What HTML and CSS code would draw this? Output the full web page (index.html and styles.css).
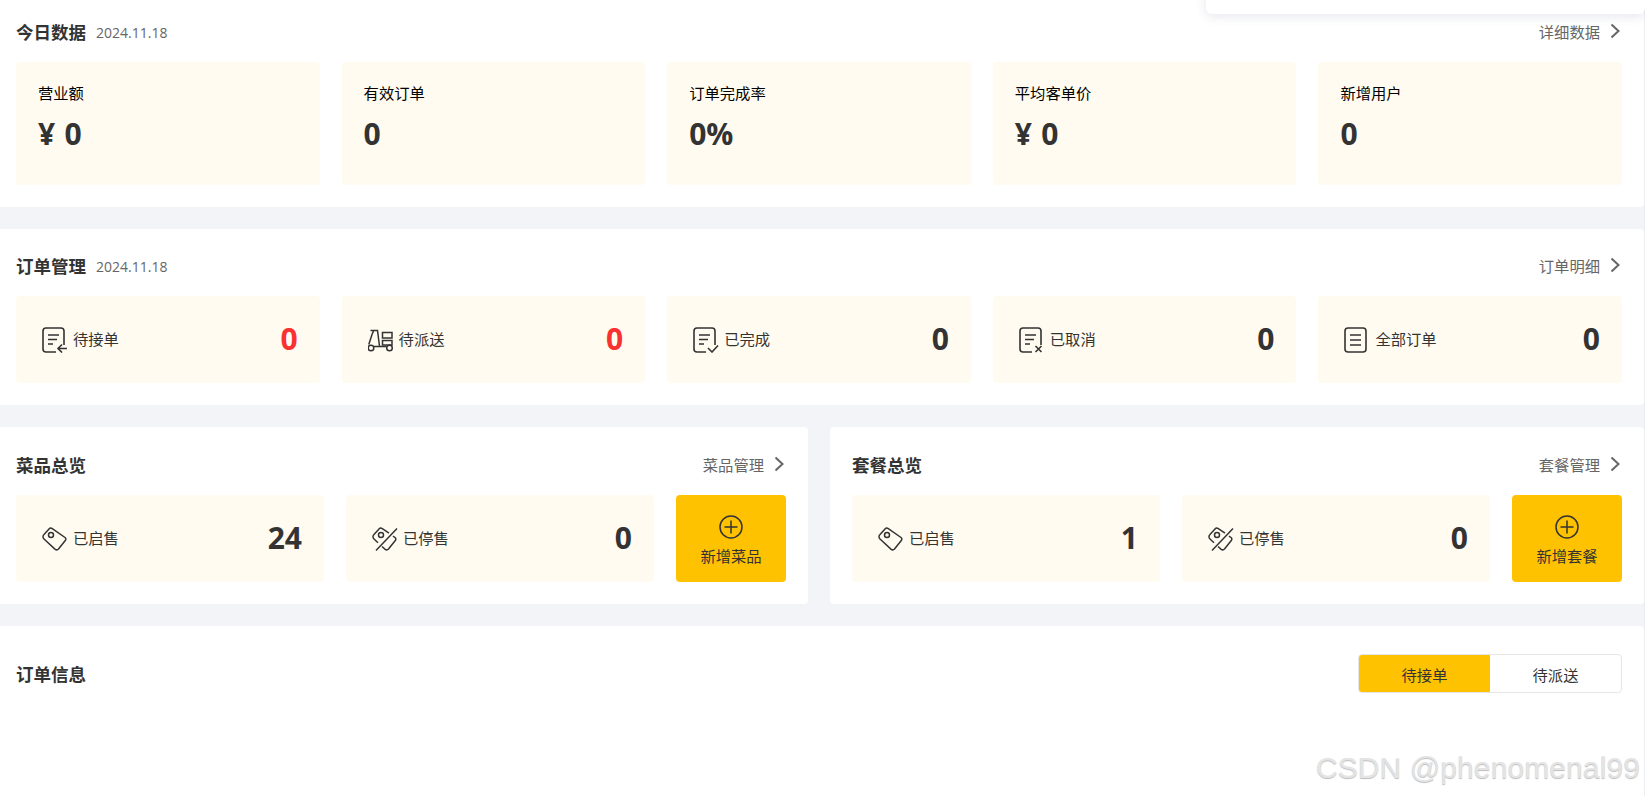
FILE: index.html
```html
<!DOCTYPE html>
<html lang="zh-CN">
<head>
<meta charset="utf-8">
<title>工作台</title>
<link rel="stylesheet" href="styles.css">
</head>
<body>
<svg class="defs" width="0" height="0" aria-hidden="true">
  <symbol id="i-chev" viewBox="0 0 12 16"><path d="M2.500 1.500 9.500 8l-7 6.500" fill="none" stroke="currentColor" stroke-width="2"/></symbol>
  <symbol id="i-wait" viewBox="0 0 26 26"><path d="M14 25H4a3 3 0 0 1-3-3V4a3 3 0 0 1 3-3h15a3 3 0 0 1 3 3v14M6 8h11M6 12.500h9M6 17h5M25 21.500h-9M20 17.500l-4 4 4 4" fill="none" stroke="currentColor" stroke-width="1.600"/></symbol>
  <symbol id="i-done" viewBox="0 0 26 26"><path d="M13 25H4a3 3 0 0 1-3-3V4a3 3 0 0 1 3-3h15a3 3 0 0 1 3 3v14M6 8h11M6 12.500h9M6 17h5M15 21l4 4 6-6.500" fill="none" stroke="currentColor" stroke-width="1.600"/></symbol>
  <symbol id="i-cancel" viewBox="0 0 26 26"><path d="M13 25H4a3 3 0 0 1-3-3V4a3 3 0 0 1 3-3h15a3 3 0 0 1 3 3v14M6 8h11M6 12.500h9M6 17h5M16.500 19l6 6M22.500 19l-6 6" fill="none" stroke="currentColor" stroke-width="1.600"/></symbol>
  <symbol id="i-all" viewBox="0 0 26 26"><rect x="1" y="1" width="21" height="24" rx="3" fill="none" stroke="currentColor" stroke-width="1.600"/><path d="M6 8h11M6 13h11M6 18h11" fill="none" stroke="currentColor" stroke-width="1.600"/></symbol>
  <symbol id="i-truck" viewBox="0 0 26 26"><path d="M2.500 3.500h7l2 15.500M5.500 4 4 7.500.8 17.500M5.500 19.500h13" fill="none" stroke="currentColor" stroke-width="1.500"/><rect x="14.500" y="5.500" width="9.500" height="5.500" fill="none" stroke="currentColor" stroke-width="1.500"/><rect x="14.500" y="13.500" width="9.500" height="4.500" fill="none" stroke="currentColor" stroke-width="1.500"/><circle cx="3" cy="21" r="2.800" fill="none" stroke="currentColor" stroke-width="1.500"/><circle cx="21.500" cy="21" r="2.800" fill="none" stroke="currentColor" stroke-width="1.500"/></symbol>
  <symbol id="i-tag" viewBox="0 1.500 26 26"><path d="M2 10 7 4.500a2.500 2.500 0 0 1 3.300-.4L23 13a2 2 0 0 1 .3 3l-6.800 8.500a2.500 2.500 0 0 1-3.300.3L2 14.500a3 3 0 0 1 0-4.500Z" fill="none" stroke="currentColor" stroke-width="1.500"/><circle cx="9" cy="10.500" r="2.500" fill="none" stroke="currentColor" stroke-width="1.500"/></symbol>
  <symbol id="i-stop" viewBox="0 1.500 26 26"><path d="M6 18.200 2 14.500a3 3 0 0 1 0-4.500L7 4.500a2.500 2.500 0 0 1 3.300-.4L17 8.700M21 11.600l2 1.400a2 2 0 0 1 .3 3l-6.800 8.500a2.500 2.500 0 0 1-3.300.3L10 22M25 4 4 26" fill="none" stroke="currentColor" stroke-width="1.500"/><circle cx="9" cy="10.500" r="2.500" fill="none" stroke="currentColor" stroke-width="1.500"/></symbol>
  <symbol id="i-plus" viewBox="0 0 24 24"><circle cx="12" cy="12" r="11" fill="none" stroke="currentColor" stroke-width="1.500"/><path d="M12 5.500v13M5.500 12h13" fill="none" stroke="currentColor" stroke-width="1.500"/></symbol>
</svg>

<main class="page">
  <section class="panel">
    <header class="head">
      <div class="title-group"><h2 class="title">今日数据</h2><span class="date">2024.11.18</span></div>
      <a class="more">详细数据<svg class="chev"><use href="#i-chev"/></svg></a>
    </header>
    <div class="row">
      <div class="stat"><div class="stat-label">营业额</div><div class="stat-value">¥ 0</div></div>
      <div class="stat"><div class="stat-label">有效订单</div><div class="stat-value">0</div></div>
      <div class="stat"><div class="stat-label">订单完成率</div><div class="stat-value">0%</div></div>
      <div class="stat"><div class="stat-label">平均客单价</div><div class="stat-value">¥ 0</div></div>
      <div class="stat"><div class="stat-label">新增用户</div><div class="stat-value">0</div></div>
    </div>
  </section>

  <section class="panel">
    <header class="head">
      <div class="title-group"><h2 class="title">订单管理</h2><span class="date">2024.11.18</span></div>
      <a class="more">订单明细<svg class="chev"><use href="#i-chev"/></svg></a>
    </header>
    <div class="row">
      <div class="tile"><svg class="ico"><use href="#i-wait"/></svg><span class="tile-label">待接单</span><b class="num alert">0</b></div>
      <div class="tile"><svg class="ico"><use href="#i-truck"/></svg><span class="tile-label">待派送</span><b class="num alert">0</b></div>
      <div class="tile"><svg class="ico"><use href="#i-done"/></svg><span class="tile-label">已完成</span><b class="num">0</b></div>
      <div class="tile"><svg class="ico"><use href="#i-cancel"/></svg><span class="tile-label">已取消</span><b class="num">0</b></div>
      <div class="tile"><svg class="ico"><use href="#i-all"/></svg><span class="tile-label">全部订单</span><b class="num">0</b></div>
    </div>
  </section>

  <div class="split">
    <section class="panel">
      <header class="head head-tall">
        <h2 class="title">菜品总览</h2>
        <a class="more">菜品管理<svg class="chev"><use href="#i-chev"/></svg></a>
      </header>
      <div class="row">
        <div class="tile"><svg class="ico"><use href="#i-tag"/></svg><span class="tile-label">已启售</span><b class="num">24</b></div>
        <div class="tile"><svg class="ico"><use href="#i-stop"/></svg><span class="tile-label">已停售</span><b class="num">0</b></div>
        <button class="add"><svg class="add-ico"><use href="#i-plus"/></svg>新增菜品</button>
      </div>
    </section>
    <section class="panel">
      <header class="head head-tall">
        <h2 class="title">套餐总览</h2>
        <a class="more">套餐管理<svg class="chev"><use href="#i-chev"/></svg></a>
      </header>
      <div class="row">
        <div class="tile"><svg class="ico"><use href="#i-tag"/></svg><span class="tile-label">已启售</span><b class="num">1</b></div>
        <div class="tile"><svg class="ico"><use href="#i-stop"/></svg><span class="tile-label">已停售</span><b class="num">0</b></div>
        <button class="add"><svg class="add-ico"><use href="#i-plus"/></svg>新增套餐</button>
      </div>
    </section>
  </div>

  <section class="panel panel-last">
    <header class="orders-head">
      <h2 class="title orders-title">订单信息</h2>
      <div class="toggle"><span class="toggle-item is-active">待接单</span><span class="toggle-item">待派送</span></div>
    </header>
  </section>
</main>

<div class="popup"></div>
<div class="watermark">CSDN @phenomenal99</div>
</body>
</html>
```

FILE: styles.css
```css
* { box-sizing: border-box; }

html, body {
  margin: 0;
  height: 100%;
  overflow: hidden;
}

body {
  position: relative;
  background: #fff;
  color: #333;
  font-family: "Open Sans", "Noto Sans CJK SC", sans-serif;
  font-size: 14px;
}

.defs { position: absolute; }

.page {
  display: flex;
  flex-direction: column;
  gap: 22px;
  width: 1651px;
  height: 807px;
  margin: -5px 0 0 -6px;
  background: #f3f4f7;
  border-right: 1px solid #eceef2;
}

.panel {
  flex: 1 1 0;
  min-width: 0;
  padding: 0 22px 22px;
  background: #fff;
  border-radius: 4px;
}

.panel-last { flex: 1 1 auto; padding-bottom: 0; }

.head {
  display: flex;
  align-items: center;
  justify-content: space-between;
  height: 67px;
  padding-top: 17px;
  padding-bottom: 10px;
}

.head-tall { height: 68px; padding-top: 16px; padding-bottom: 8px; }

.title-group { display: flex; align-items: center; gap: 10px; }

.title {
  margin: 0;
  font-family: "Noto Sans CJK SC", sans-serif;
  font-size: 17.500px;
  font-weight: 700;
  color: #333;
  line-height: 24px;
}

.orders-title { margin-top: 1px; }

.date { color: #666; font-size: 14px; }

.more {
  display: flex;
  align-items: center;
  gap: 9px;
  margin: 0 1px 2px 0;
  color: #666;
  font-family: "Noto Sans CJK SC", sans-serif;
  font-size: 15.300px;
}

.chev { width: 12px; height: 16px; }

.row { display: flex; gap: 22px; }

.stat {
  flex: 1 1 0;
  height: 123px;
  padding: 20px 22px;
  background: #fffbf0;
  border-radius: 4px;
}

.stat-label {
  font-family: "Noto Sans CJK SC", sans-serif;
  font-size: 15.300px;
  line-height: 20px;
  color: #000;
}

.stat-value {
  margin-top: 11px;
  font-size: 30px;
  line-height: 42px;
  font-weight: 700;
  word-spacing: 1.500px;
  color: #333;
}

.tile {
  flex: 1 1 0;
  display: flex;
  align-items: center;
  height: 87px;
  padding: 0 22px 2px 26px;
  background: #fffbf0;
  border-radius: 4px;
}

.ico { flex: none; width: 26px; height: 26px; margin: 3px 5px 0 0; color: #333; }

.tile-label {
  margin-bottom: 2px;
  font-family: "Noto Sans CJK SC", sans-serif;
  font-size: 15.300px;
  color: #333;
}

.num {
  margin-left: auto;
  font-size: 30px;
  line-height: 42px;
  font-weight: 700;
  color: #333;
}

.alert { color: #f93131; }

.split { display: flex; gap: 22px; }

.add {
  flex: none;
  display: flex;
  flex-direction: column;
  align-items: center;
  gap: 6px;
  width: 110px;
  height: 87px;
  padding: 20px 0 0;
  border: 0;
  border-radius: 4px;
  background: #ffc200;
  color: #333;
  font-family: "Noto Sans CJK SC", sans-serif;
  font-size: 15.300px;
  line-height: 20px;
}

.add-ico { width: 24px; height: 24px; }

.orders-head {
  display: flex;
  align-items: center;
  justify-content: space-between;
  padding-top: 28px;
}

.toggle {
  display: flex;
  width: 264px;
  height: 39px;
  border: 1px solid #e5e6ea;
  border-radius: 4px;
  overflow: hidden;
}

.toggle-item {
  flex: 1 1 0;
  display: flex;
  align-items: center;
  justify-content: center;
  font-family: "Noto Sans CJK SC", sans-serif;
  font-size: 15.300px;
  color: #333;
}

.is-active { background: #ffc200; }

.popup {
  position: absolute;
  top: -10px;
  right: 0;
  width: 439px;
  height: 24px;
  background: #fff;
  border-radius: 6px;
  box-shadow: 0 2px 12px rgba(30, 40, 90, .12);
}

.watermark {
  position: absolute;
  right: 5px;
  bottom: 10px;
  font-family: "Liberation Sans", sans-serif;
  font-size: 30px;
  letter-spacing: .1px;
  line-height: 36px;
  color: #e4e4e4;
  text-shadow: 0 1px 1px #bdbdbd;
}
```
